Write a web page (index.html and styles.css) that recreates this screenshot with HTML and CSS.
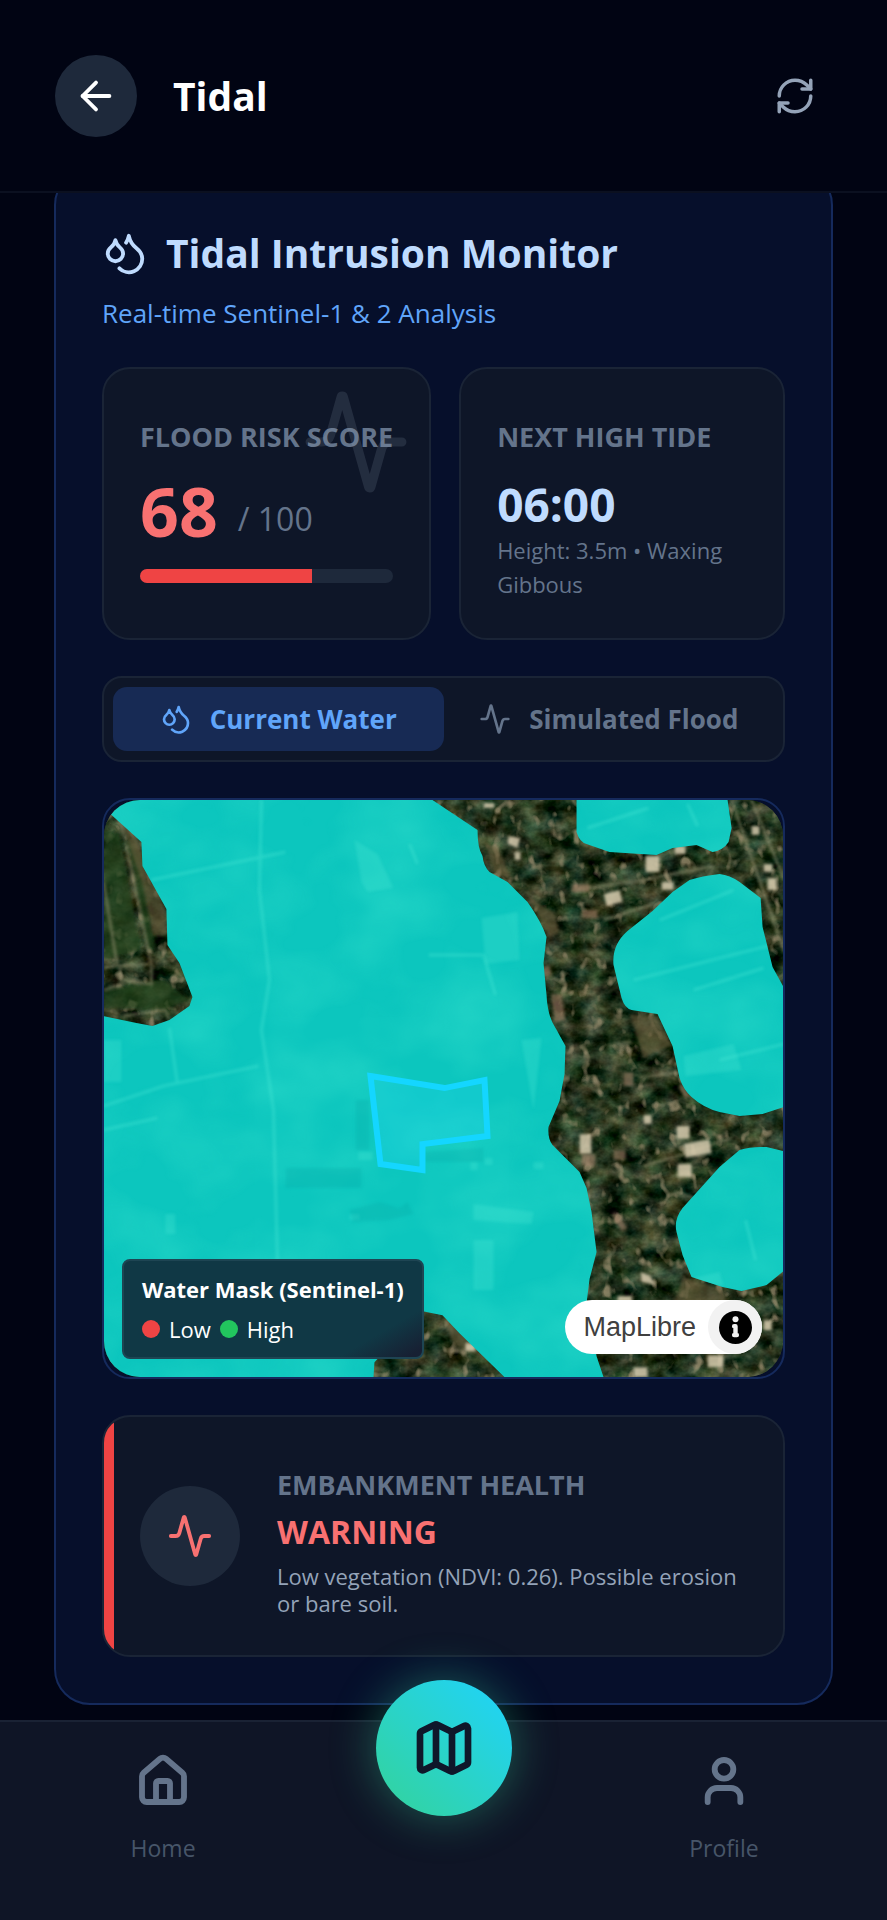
FILE: index.html
```html
<!DOCTYPE html>
<html lang="en">
<head>
<meta charset="utf-8">
<meta name="viewport" content="width=device-width, initial-scale=1">
<title>Tidal</title>
<link rel="stylesheet" href="styles.css">
</head>
<body>
<svg class="sprite" aria-hidden="true">
  <symbol id="drops" viewBox="0 0 24 24"><path d="M7 16.3c2.2 0 4-1.83 4-4.05 0-1.16-.57-2.26-1.71-3.19S7.29 6.75 7 5.3c-.29 1.45-1.14 2.84-2.29 3.76S3 11.1 3 12.25c0 2.22 1.8 4.05 4 4.05z"/><path d="M12.56 6.6A10.97 10.97 0 0 0 14 3.02c.5 2.5 2 4.9 4 6.5s3 3.5 3 5.5a6.98 6.98 0 0 1-11.91 4.97"/></symbol>
  <symbol id="pulse" viewBox="0 0 24 24"><path d="M22 12h-2.48a2 2 0 0 0-1.93 1.46l-2.35 8.36a.25.25 0 0 1-.48 0L9.24 2.18a.25.25 0 0 0-.48 0l-2.35 8.36A2 2 0 0 1 4.49 12H2"/></symbol>
</svg>

<header class="topbar">
  <button class="back" type="button" aria-label="Back">
    <svg class="icon icon-lg" viewBox="0 0 24 24"><path d="m12 19-7-7 7-7"/><path d="M19 12H5"/></svg>
  </button>
  <h1 class="topbar-title">Tidal</h1>
  <button class="refresh" type="button" aria-label="Refresh">
    <svg class="icon icon-md" viewBox="0 0 24 24"><path d="M3 12a9 9 0 0 1 9-9 9.75 9.75 0 0 1 6.74 2.74L21 8"/><path d="M21 3v5h-5"/><path d="M21 12a9 9 0 0 1-9 9 9.75 9.75 0 0 1-6.74-2.74L3 16"/><path d="M8 16H3v5"/></svg>
  </button>
</header>

<main class="content">
  <section class="monitor">
    <div class="monitor-head">
      <h2 class="monitor-title"><svg class="icon icon-lg"><use href="#drops"/></svg>Tidal Intrusion Monitor</h2>
      <p class="monitor-sub">Real-time Sentinel-1 &amp; 2 Analysis</p>
    </div>

    <div class="stats">
      <article class="stat">
        <h3 class="label">FLOOD RISK SCORE</h3>
        <p class="score"><strong class="score-value">68</strong><span class="score-max">/ 100</span></p>
        <div class="meter"><div class="meter-fill" style="width:68%"></div></div>
        <svg class="icon watermark"><use href="#pulse"/></svg>
      </article>
      <article class="stat">
        <h3 class="label">NEXT HIGH TIDE</h3>
        <p class="tide-time">06:00</p>
        <p class="tide-info">Height: 3.5m • Waxing Gibbous</p>
      </article>
    </div>

    <div class="tabs">
      <button class="tab tab-active" type="button" aria-pressed="true"><svg class="icon icon-sm"><use href="#drops"/></svg>Current Water</button>
      <button class="tab" type="button" aria-pressed="false"><svg class="icon icon-sm"><use href="#pulse"/></svg>Simulated Flood</button>
    </div>

    <div class="map">
      <svg class="map-canvas" viewBox="0 0 680 577" preserveAspectRatio="xMidYMid slice" role="img" aria-label="Satellite map with water mask">
        <defs>
          <filter id="ground" x="0" y="0" width="100%" height="100%" color-interpolation-filters="sRGB">
            <feTurbulence type="fractalNoise" baseFrequency="0.05 0.06" numOctaves="4" seed="11"/>
            <feColorMatrix values="0.6 0.2 0 0 -0.25  0.6 0 0 0 -0.09  0.5 0 0.1 0 -0.18  0 0 0 0 1"/>
          </filter>
          <filter id="specks" x="0" y="0" width="100%" height="100%" color-interpolation-filters="sRGB">
            <feTurbulence type="fractalNoise" baseFrequency="0.09 0.07" numOctaves="2" seed="23"/>
            <feColorMatrix values="0 0 0 0 0.64  0 0 0 0 0.58  0 0 0 0 0.46  5 0 0 0 -3"/>
          </filter>
          <filter id="fields" x="0" y="0" width="100%" height="100%" color-interpolation-filters="sRGB">
            <feTurbulence type="fractalNoise" baseFrequency="0.012 0.016" numOctaves="3" seed="4"/>
            <feColorMatrix values="0 0 0 0 0.25  0 0 0 0 0.9  0 0 0 0 0.82  1.2 0 0 0 -0.42"/>
          </filter>
          <filter id="soft"><feGaussianBlur stdDeviation="1.5"/></filter>
          <clipPath id="water">
            <path d="M0 0H329L374 30Q374 48 379 56 380 66 386 72L404 82 424 102Q438 122 443 137L440 163 443 195Q444 216 452 228L462 246 461 274 456 301 445 327Q444 338 449 345L476 372 483 388 488 412 493 452 486 479 483 503 493 556 500 577H401L356 533 339 515 318 511 271 562 270 577H0V216L33 223 49 226 66 220 86 206 89 197 76 163 64 145 63 109 39 66 38 42 6 13 0 6Z"/>
            <path d="M473 0V32Q476 42 483 44L506 52 553 55 569 48 593 45 609 52Q620 50 625 42L628 28 624 0Z"/>
            <path d="M616 74Q598 76 586 80L569 92 549 111 524 131Q508 145 510 165L518 198Q521 208 528 210L554 214 569 246 576 278Q580 290 588 297 600 308 616 312L636 316 659 314 680 307V187L669 167 659 127 657 98 636 82Q626 75 616 74Z"/>
            <path d="M680 351 663 347Q648 346 636 350L616 367 579 408Q570 420 573 432L579 455 588 477 619 487 638 491 663 485 680 471Z"/>
          </clipPath>
        </defs>
        <rect class="land" width="680" height="577"/>
        <rect width="680" height="577" filter="url(#ground)"/>
        <rect width="680" height="577" filter="url(#specks)" opacity="0.7"/>
        <g class="meadow" filter="url(#soft)">
          <path d="M0 30 16 34 38 150 0 160ZM22 30 38 60 52 150 44 150ZM0 190 60 180 86 200 60 210 0 208Z"/>
        </g>
        <g class="scrub" filter="url(#soft)">
          <path d="M8 14 28 24 46 70 62 110 62 136 50 136 38 80 18 24ZM380 40 396 50 408 80 392 74ZM426 98 450 112 456 132 446 138ZM526 214 552 216 568 245 540 258ZM340 516 362 532 392 562 350 545ZM580 478 618 488 624 503 570 503Z"/>
        </g>
        <g class="trails" filter="url(#soft)">
          <path d="M16 14 48 165V184L18 180 16 166 45 164M0 82 14 166M0 168 15 165M0 190 20 184M20 216 62 210 66 220"/>
          <path d="M470 90 540 80 610 66M505 246 528 242M536 278 576 272M540 366 580 354 628 338M628 0 680 150M648 0 680 78M500 120 550 104M572 392 590 398"/>
        </g>
        <g class="roofs" filter="url(#soft)">
          <path d="M542 56h14v16h-14zM558 82h12v8h-12zM500 94l16-4 3 12-16 4zM405 36l12 2-3 10-10-4zM411 52h6v8h-6zM476 334h12v20h-12zM573 326h13v13h-13zM580 344l26-5 2 14-26 5zM574 364h14v13h-14zM540 315h8v9h-8zM660 64h9v8h-9zM664 78h9v12h-9zM648 26h8v9h-8zM537 472l10 4 5 9-14-3zM514 496h14v6h-14zM362 543h10v8h-10zM530 567h14v10h-14zM380 3h11v5h-11zM571 46h11v8h-11zM660 520h8v10h-8zM604 555h16v12h-16z"/>
        </g>
        <g class="ruddy" filter="url(#soft)">
          <path d="M447 194h11l4 26-11 2zM478 354h14v12h-14zM578 283l8 12-4 4-7-12zM438 168l8-3 2 10-8 2zM520 272h10v14h-10zM510 350h12v10h-12zM468 84h18v8h-18zM478 110h16v8h-16zM512 412l12 16-6 3-10-16z"/>
        </g>
        <g clip-path="url(#water)">
          <rect class="sea" width="680" height="577"/>
          <rect width="680" height="577" filter="url(#fields)" opacity="0.55"/>
          <g class="seams" filter="url(#soft)">
            <path d="M158 0 156 90 166 180 158 230 170 310 174 460M48 80 182 52M66 228 74 284M0 306 60 286 155 266M0 330 54 318M306 44 314 64M484 28 545 8M584 4 594 26M530 180 640 152 680 142M590 190 660 168M616 260 680 244M556 120 630 90M642 420 652 460M325 155H380L392 195"/>
          </g>
          <g class="plots" filter="url(#soft)">
            <path d="M251 40 274 54 290 88 264 92 258 82ZM378 118 414 112 416 160 382 164ZM580 256 630 244 638 270 582 276ZM370 404 430 412 428 424 370 420ZM418 240 438 238 430 310ZM0 240H18V282H0ZM370 440h20v50h-20zM62 414h10v20h-10z"/>
            <path d="M255 352h14v8h-14zM381 358h8v7h-8zM430 362h10v7h-10zM367 362h7v8h-7zM590 478l26-6 4 14-30-4zM246 414h10v6h-10z"/>
          </g>
          <g class="shade" filter="url(#soft)">
            <path d="M182 368H258V388H182ZM246 410l30-8 20 6 8-6 6 12-24 6-36 2ZM252 300h14v50h-14zM320 352l60-4v14h-60z"/>
          </g>
        </g>
        <path class="parcel" d="M267 276 341 288 381 280 384 336 319 344V370L277 364Z"/>
      </svg>
      <div class="legend">
        <strong class="legend-title">Water Mask (Sentinel-1)</strong>
        <div class="legend-row"><span class="dot dot-low"></span>Low<span class="dot dot-high"></span>High</div>
      </div>
      <div class="credit">
        <a class="credit-link" href="#maplibre">MapLibre</a>
        <button class="credit-info" type="button" aria-label="Toggle attribution">
          <svg class="credit-icon" viewBox="0 0 24 24"><circle cx="12" cy="12" r="12"/><path class="cut" d="M12 11v6.5M11 11h1M11 17.5h2"/><circle class="cut-dot" cx="12" cy="6" r="2.2"/></svg>
        </button>
      </div>
    </div>

    <article class="health">
      <div class="health-badge"><svg class="icon icon-lg"><use href="#pulse"/></svg></div>
      <div class="health-text">
        <h3 class="label">EMBANKMENT HEALTH</h3>
        <p class="health-state">WARNING</p>
        <p class="health-info">Low vegetation (NDVI: 0.26). Possible erosion or bare soil.</p>
      </div>
    </article>
  </section>
</main>

<nav class="nav">
  <a class="nav-item" href="#home">
    <svg class="icon nav-icon" viewBox="0 0 24 24"><path d="M15 21v-8a1 1 0 0 0-1-1h-4a1 1 0 0 0-1 1v8"/><path d="M3 10a2 2 0 0 1 .709-1.528l7-5.999a2 2 0 0 1 2.582 0l7 5.999A2 2 0 0 1 21 10v9a2 2 0 0 1-2 2H5a2 2 0 0 1-2-2z"/></svg>
    Home
  </a>
  <a class="fab" href="#map" aria-label="Map">
    <svg class="icon fab-icon" viewBox="0 0 24 24"><path d="M14.106 5.553a2 2 0 0 0 1.788 0l3.659-1.83A1 1 0 0 1 21 4.619v12.764a1 1 0 0 1-.553.894l-4.553 2.277a2 2 0 0 1-1.788 0l-4.212-2.106a2 2 0 0 0-1.788 0l-3.659 1.83A1 1 0 0 1 3 19.381V6.618a1 1 0 0 1 .553-.894l4.553-2.277a2 2 0 0 1 1.788 0z"/><path d="M15 5.764v15"/><path d="M9 3.236v15"/></svg>
  </a>
  <a class="nav-item" href="#profile">
    <svg class="icon nav-icon" viewBox="0 0 24 24"><path d="M19 21v-2a4 4 0 0 0-4-4H9a4 4 0 0 0-4 4v2"/><circle cx="12" cy="7" r="4"/></svg>
    Profile
  </a>
</nav>
</body>
</html>
```
FILE: styles.css
```css
* { box-sizing: border-box; }

body {
  margin: 0;
  min-height: 100vh;
  display: flex;
  flex-direction: column;
  background: #010413;
  color: #fff;
  font-family: "Open Sans", "Noto Sans", sans-serif;
}

h1, h2, h3, p { margin: 0; }

button {
  border: 0;
  padding: 0;
  background: none;
  color: inherit;
  font: inherit;
}

a { color: inherit; text-decoration: none; }

.sprite { display: none; }

.icon {
  flex: none;
  fill: none;
  stroke: currentColor;
  stroke-width: 2;
  stroke-linecap: round;
  stroke-linejoin: round;
}
.icon-sm { width: 32px; height: 32px; }
.icon-md { width: 42px; height: 42px; }
.icon-lg { width: 46px; height: 46px; }

.topbar {
  position: relative;
  z-index: 1;
  display: flex;
  align-items: center;
  gap: 36px;
  height: 193px;
  padding: 0 55px;
  border-bottom: 2px solid #0b1020;
  background: #010413;
}
.back {
  display: grid;
  place-items: center;
  width: 82px;
  height: 82px;
  border-radius: 50%;
  background: #1e293b;
}
.topbar-title { flex: 1; font-size: 39px; line-height: 56px; }
.refresh { display: grid; padding: 16px; color: #94a3b8; }

.content { flex: 1; padding: 0 54px 15px; }

.monitor {
  display: flex;
  flex-direction: column;
  gap: 36px;
  margin-top: -24px;
  padding: 54px 46px 46px;
  border: 2px solid #152a5c;
  border-radius: 36px;
  background: #060f2b;
}
.monitor-title {
  display: flex;
  align-items: center;
  gap: 18px;
  color: #bfdbfe;
  font-size: 39px;
  line-height: 56px;
}
.monitor-sub { margin-top: 14px; color: #60a5fa; font-size: 26px; line-height: 36px; }

.stats { display: grid; grid-template-columns: 1fr 1fr; gap: 28px; }
.stat {
  position: relative;
  min-height: 273px;
  padding: 48px 36px 36px;
  border: 2px solid #1a2436;
  border-radius: 28px;
  background: #0e1628;
}
.label { color: #64748b; font-size: 27px; line-height: 40px; white-space: nowrap; }
.score { display: flex; align-items: flex-end; gap: 20px; margin-top: 14px; }
.score-value { color: #f87171; font-size: 68px; line-height: 80px; }
.score-max { color: #64748b; font-size: 32px; line-height: 64px; }
.meter { height: 14px; margin-top: 18px; border-radius: 7px; background: #1e293b; overflow: hidden; }
.meter-fill { height: 100%; background: #ef4444; }
.watermark {
  position: absolute;
  top: 18px;
  right: 18px;
  width: 110px;
  height: 110px;
  color: #94a3b8;
  opacity: 0.16;
}
.tide-time { margin-top: 18px; color: #bfdbfe; font-size: 46px; line-height: 58px; font-weight: 700; }
.tide-info { color: #64748b; font-size: 22px; line-height: 34px; }

.tabs {
  display: grid;
  grid-template-columns: 1fr 1fr;
  padding: 9px;
  border: 2px solid #1a2436;
  border-radius: 20px;
  background: #0e1628;
}
.tab {
  display: flex;
  align-items: center;
  justify-content: center;
  gap: 18px;
  height: 64px;
  border-radius: 14px;
  color: #64748b;
  font-size: 26px;
  font-weight: 700;
  white-space: nowrap;
}
.tab-active { background: #172a54; color: #60a5fa; }

.map {
  position: relative;
  border: 2px solid #152a5c;
  border-radius: 28px;
}
.map-canvas { display: block; width: 100%; aspect-ratio: 680 / 578; border-radius: 36px; }
.land { fill: #26371f; }
.meadow { fill: #24421f; opacity: 0.7; }
.scrub { fill: #6b5d3e; opacity: 0.6; }
.trails { fill: none; stroke: #9c9878; stroke-width: 3; opacity: 0.5; }
.roofs { fill: #d9cdb0; opacity: 0.85; }
.ruddy { fill: #a5836a; opacity: 0.6; }
.sea { fill: #0cc6be; }
.seams { fill: none; stroke: #5af0dc; stroke-width: 3; opacity: 0.3; }
.plots { fill: #5cf0dc; opacity: 0.22; }
.shade { fill: #059c9c; opacity: 0.2; }
.parcel { fill: #22d3ee; fill-opacity: 0.3; stroke: #14d6ff; stroke-width: 6; }

.legend {
  position: absolute;
  left: 18px;
  bottom: 18px;
  padding: 10px 18px;
  border: 2px solid #1e4553;
  border-radius: 8px;
  background: linear-gradient(150deg, #103845 82%, #172033 97%);
  font-size: 22px;
  line-height: 36px;
}
.legend-title { display: block; white-space: nowrap; }
.legend-row { display: flex; align-items: center; gap: 9px; margin-top: 4px; }
.dot { width: 18px; height: 18px; border-radius: 50%; }
.dot-low { background: #ef4444; }
.dot-high { background: #22c55e; }

.credit {
  position: absolute;
  right: 21px;
  bottom: 23px;
  display: flex;
  align-items: center;
  gap: 12px;
  padding-left: 18px;
  border-radius: 27px;
  background: #fff;
  color: #404040;
  font-family: "Liberation Sans", Arial, sans-serif;
  font-size: 27px;
}
.credit-info {
  display: grid;
  place-items: center;
  width: 54px;
  height: 54px;
  border-radius: 50%;
  background: #f2f2f2;
}
.credit-icon { width: 33px; height: 33px; }
.cut { fill: none; stroke: #f2f2f2; stroke-width: 3.2; stroke-linecap: round; }
.cut-dot { fill: #f2f2f2; }

.health {
  display: flex;
  align-items: center;
  gap: 37px;
  min-height: 242px;
  padding: 36px;
  border: 2px solid #1a2436;
  border-radius: 28px;
  background: linear-gradient(to right, #ef4444 10px, #0e1628 10px);
}
.health-badge {
  flex: none;
  display: grid;
  place-items: center;
  width: 100px;
  height: 100px;
  border-radius: 50%;
  background: #1e293b;
  color: #f87171;
}
.health-text { padding-top: 10px; }
.health-state { color: #f87171; font-size: 32px; line-height: 54px; font-weight: 700; }
.health-info { margin-top: 4px; color: #94a3b8; font-size: 22px; line-height: 27px; }

.nav {
  display: flex;
  justify-content: space-between;
  align-items: flex-start;
  height: 200px;
  padding: 0 54px;
  border-top: 2px solid #1a2234;
  background: #0f1526;
}
.nav-item {
  display: flex;
  flex: 0 0 28%;
  flex-direction: column;
  align-items: center;
  gap: 22px;
  padding-top: 31px;
  color: #475569;
  font-size: 23px;
  line-height: 34px;
}
.nav-icon { width: 56px; height: 56px; color: #64748b; stroke-width: 2.5; }
.fab {
  display: grid;
  place-items: center;
  width: 136px;
  height: 136px;
  margin-top: -42px;
  border-radius: 50%;
  background: linear-gradient(45deg, #34d399, #22d3ee 85%);
  box-shadow: 0 0 46px rgba(52, 211, 153, 0.4);
  color: #0f172a;
}
.fab-icon { width: 64px; height: 64px; stroke-width: 2.5; }
```
